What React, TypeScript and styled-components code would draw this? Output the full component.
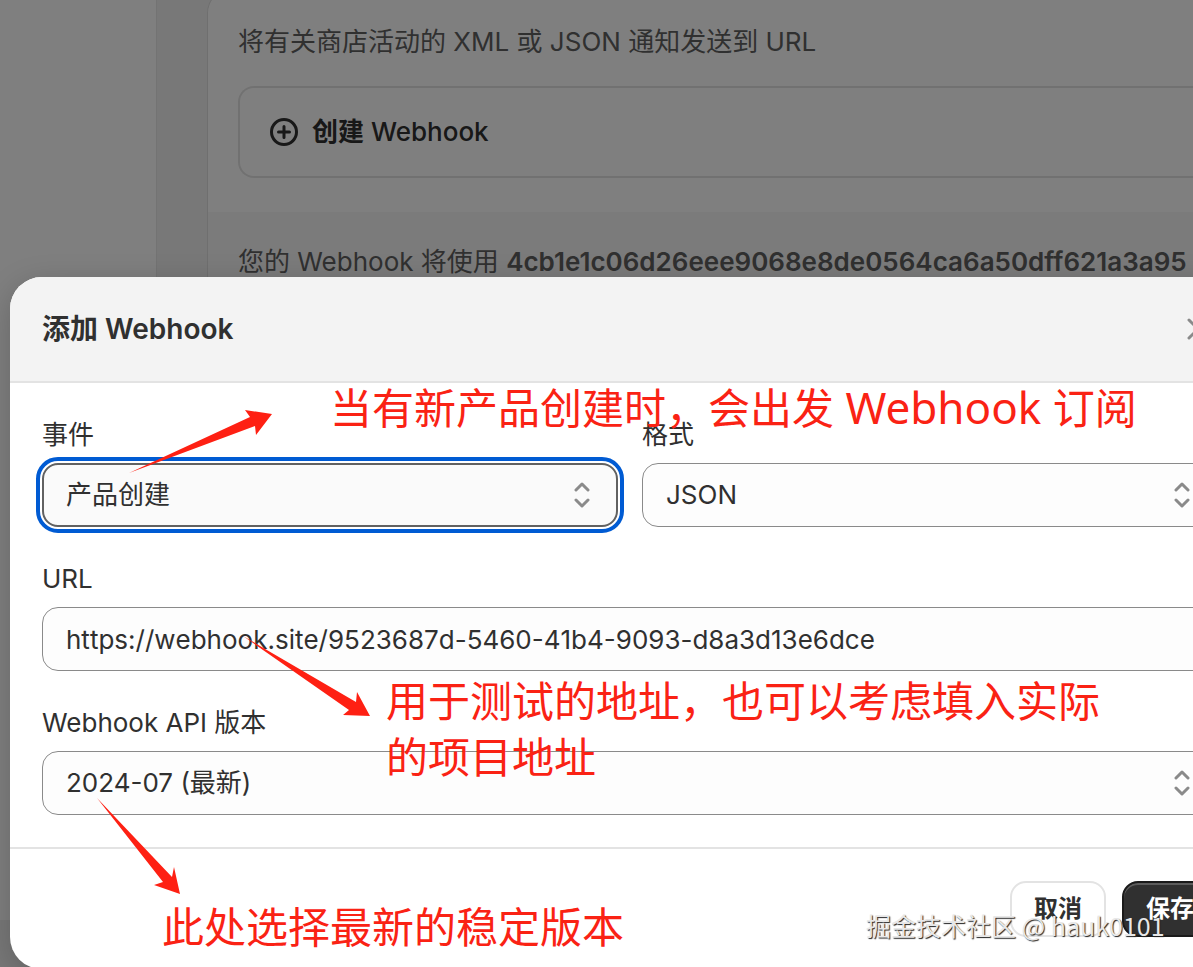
import React from 'react';
import styled, { createGlobalStyle } from 'styled-components';

const GlobalStyle = createGlobalStyle`
  *, *::before, *::after { box-sizing: border-box; }
  html, body, #root { height: 100%; }
  body {
    margin: 0;
    overflow: hidden;
    font-family: Inter, "Noto Sans CJK SC", sans-serif;
    font-size: 26px;
    line-height: 40px;
    color: #303030;
    background: #f1f1f1;
  }
  button, input, select { font: inherit; color: inherit; }
  p, h2 { margin: 0; }
`;

const Page = styled.div`
  position: relative;
  display: flex;
  height: 100vh;
  overflow: hidden;
`;

const Sidebar = styled.aside`
  flex: 0 0 157px;
  margin-bottom: 47px;
  background: #fff;
  border-right: 1px solid #e6e6e6;
`;

const Main = styled.main`
  flex: 1;
  min-width: 0;
  padding-left: 50px;
`;

const Card = styled.section`
  margin-top: -11px;
  border: 1px solid #dedede;
  border-right: 0;
  border-radius: 24px 0 0 24px;
  background: #fff;
  overflow: hidden;
`;

const CardBody = styled.div`
  display: flex;
  flex-direction: column;
  gap: 24px;
  padding: 32px 0 34px 30px;
`;

const CardFooter = styled.div`
  padding: 30px 0 32px 30px;
  background: #f7f7f7;
`;

const Description = styled.p`
  color: #616161;
  white-space: nowrap;
`;

const Fingerprint = styled.b`
  font-weight: 600;
`;

const CreateButton = styled.button`
  display: flex;
  align-items: center;
  gap: 13px;
  height: 92px;
  padding: 0 29px;
  border: 2px solid #e3e3e3;
  border-right: 0;
  border-radius: 16px 0 0 16px;
  background: #fff;
  font-weight: 500;
  text-align: left;
`;

const StrongZh = styled.span`
  font-weight: 700;
`;

const Backdrop = styled.div`
  position: absolute;
  inset: 0;
  padding: 277px 0 0 10px;
  background: rgba(0, 0, 0, 0.5);
`;

const Dialog = styled.div`
  width: calc(100% + 57px);
  border-radius: 32px;
  background: #fff;
  box-shadow: 0 8px 32px rgba(0, 0, 0, 0.2);
  overflow: hidden;
`;

const DialogHeader = styled.header`
  display: flex;
  align-items: center;
  justify-content: space-between;
  height: 106px;
  padding: 0 32px;
  border-bottom: 2px solid #e3e3e3;
  background: #f3f3f3;
`;

const DialogTitle = styled.h2`
  font-size: 28px;
  font-weight: 600;
`;

const CloseButton = styled.button`
  display: flex;
  padding: 0;
  border: 0;
  background: none;
  color: #8a8a8a;
`;

const Form = styled.form`
  display: grid;
  grid-template-columns: 1fr 1fr;
  gap: 32px 24px;
  padding: 32px;
`;

const Field = styled.div<{ $wide?: boolean }>`
  display: flex;
  flex-direction: column;
  gap: 8px;
  grid-column: ${(p) => (p.$wide ? '1 / -1' : 'auto')};
`;

const Control = styled.div<{ $focused?: boolean }>`
  display: flex;
  align-items: center;
  height: 64px;
  border: ${(p) => (p.$focused ? '2px solid #616161' : '1px solid #8a8a8a')};
  border-radius: 16px;
  padding: ${(p) => (p.$focused ? '0 25px 0 22px' : '0 26px 0 23px')};
  background: ${(p) => (p.$focused ? '#fafafa' : '#fdfdfd')};
  outline: ${(p) => (p.$focused ? '4px solid #005bd3' : 'none')};
  outline-offset: 2px;
`;

const Select = styled.select`
  flex: 1;
  min-width: 0;
  height: 100%;
  padding: 0;
  border: 0;
  outline: 0;
  background: none;
  appearance: none;
`;

const TextInput = styled.input`
  flex: 1;
  min-width: 0;
  height: 100%;
  padding: 0;
  border: 0;
  outline: 0;
  background: none;
  font-kerning: none;
`;

const DialogFooter = styled.footer`
  display: flex;
  justify-content: flex-end;
  gap: 16px;
  padding: 32px;
  border-top: 2px solid #e3e3e3;
`;

const Button = styled.button<{ $primary?: boolean }>`
  width: 96px;
  height: 56px;
  padding: 0;
  border: 2px solid ${(p) => (p.$primary ? '#1a1a1a' : '#e3e3e3')};
  border-radius: 16px;
  background: ${(p) => (p.$primary ? '#303030' : '#fff')};
  box-shadow: ${(p) => (p.$primary ? 'inset 0 2px 0 #5c5c5c' : 'none')};
  color: ${(p) => (p.$primary ? '#fff' : '#303030')};
  font-size: 24px;
  font-weight: 700;
`;

const Note = styled.p<{ $x: number; $y: number }>`
  position: absolute;
  left: ${(p) => p.$x}px;
  top: ${(p) => p.$y}px;
  color: #fa2214;
  font-family: "Noto Sans", "Noto Sans CJK SC", sans-serif;
  font-size: 42px;
  line-height: 56px;
  white-space: nowrap;
`;

const NoteLatin = styled.span`
  font-size: 44px;
  line-height: 1;
`;

const Arrows = styled.svg`
  position: absolute;
  left: 0;
  top: 0;
  pointer-events: none;
`;

const Watermark = styled.p`
  position: absolute;
  left: 866px;
  top: 905px;
  color: #e8e8e8;
  font-family: "Noto Sans CJK SC", sans-serif;
  font-size: 25px;
  text-shadow: 1px 1px 1px #222;
  white-space: nowrap;
`;

const UpDown = () => (
  <svg width="18" height="26" viewBox="0 0 18 26" fill="none" stroke="#8a8a8a" strokeWidth="3" strokeLinecap="round" strokeLinejoin="round" aria-hidden="true">
    <path d="M3 8 9 2l6 6M3 18l6 6 6-6" />
  </svg>
);

export default function App() {
  return (
    <Page>
      <GlobalStyle />
      <Sidebar />
      <Main>
        <Card>
          <CardBody>
            <Description>将有关商店活动的 XML 或 JSON 通知发送到 URL</Description>
            <CreateButton type="button">
              <svg width="30" height="30" viewBox="0 0 30 30" fill="none" stroke="#303030" strokeWidth="3" strokeLinecap="round" aria-hidden="true">
                <circle cx="15" cy="15" r="12.5" />
                <path d="M15 9.5v11M9.5 15h11" />
              </svg>
              <span><StrongZh>创建</StrongZh> Webhook</span>
            </CreateButton>
          </CardBody>
          <CardFooter>
            <Description>
              您的 Webhook 将使用 <Fingerprint>4cb1e1c06d26eee9068e8de0564ca6a50dff621a3a95</Fingerprint>
            </Description>
          </CardFooter>
        </Card>
      </Main>
      <Backdrop>
        <Dialog role="dialog" aria-labelledby="dialog-title">
          <DialogHeader>
            <DialogTitle id="dialog-title">添加 Webhook</DialogTitle>
            <CloseButton type="button" aria-label="关闭">
              <svg width="40" height="40" viewBox="0 0 40 40" fill="none" stroke="currentColor" strokeWidth="3" strokeLinecap="round">
                <path d="m11 11 18 18M29 11 11 29" />
              </svg>
            </CloseButton>
          </DialogHeader>
          <Form>
            <Field>
              <label htmlFor="event">事件</label>
              <Control $focused>
                <Select id="event"><option>产品创建</option></Select>
                <UpDown />
              </Control>
            </Field>
            <Field>
              <label htmlFor="format">格式</label>
              <Control>
                <Select id="format"><option>JSON</option></Select>
                <UpDown />
              </Control>
            </Field>
            <Field $wide>
              <label htmlFor="url">URL</label>
              <Control>
                <TextInput id="url" type="text" defaultValue="https://webhook.site/9523687d-5460-41b4-9093-d8a3d13e6dce" />
              </Control>
            </Field>
            <Field $wide>
              <label htmlFor="version">Webhook API 版本</label>
              <Control>
                <Select id="version"><option>2024-07 (最新)</option></Select>
                <UpDown />
              </Control>
            </Field>
          </Form>
          <DialogFooter>
            <Button type="button">取消</Button>
            <Button type="button" $primary>保存</Button>
          </DialogFooter>
        </Dialog>
      </Backdrop>
      <Arrows width="1193" height="967" viewBox="0 0 1193 967" fill="#fe2013" aria-hidden="true">
        <path d="M129 473 250 417 245 410 272 414 256 435 255 426Z" />
        <path d="M243 636 356 702 357 692 370 716 343 715 349 710Z" />
        <path d="M97 798 172 877 174 867 180 894 154 885 163 882Z" />
      </Arrows>
      <Note $x={330} $y={380}>当有新产品创建时，会出发<NoteLatin> Webhook </NoteLatin>订阅</Note>
      <Note $x={386} $y={673}>用于测试的地址，也可以考虑填入实际<br />的项目地址</Note>
      <Note $x={162} $y={899}>此处选择最新的稳定版本</Note>
      <Watermark>掘金技术社区 @ hauk0101</Watermark>
    </Page>
  );
}
